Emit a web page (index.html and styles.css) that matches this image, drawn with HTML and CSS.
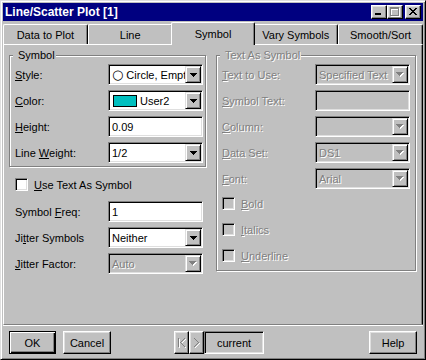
FILE: index.html
```html
<!DOCTYPE html>
<html lang="en">
<head>
    <meta charset="UTF-8">
    <title>Line/Scatter Plot [1]</title>
    <link rel="stylesheet" href="styles.css">
</head>
<body>
    <div class="window">
        <div class="titlebar">
            <span class="title">Line/Scatter Plot [1]</span>
            <div class="title-buttons">
                <span class="tbtn"><svg width="14" height="12"><rect x="3" y="7" width="6" height="2" fill="#000"/></svg></span>
                <span class="tbtn"><svg width="14" height="12">
                    <path d="M3 2h9v9h-9z M4 4v6h7v-6z" fill="#fff" fill-rule="evenodd"/>
                    <path d="M2 1h9v9h-9z M3 3v6h7v-6z" fill="#808080" fill-rule="evenodd"/>
                </svg></span>
                <span class="tbtn close"><svg width="14" height="12"><path transform="translate(3 2)" d="M0 0h2v1h-2z M6 0h2v1h-2z M1 1h2v1h-2z M5 1h2v1h-2z M2 2h4v1h-4z M3 3h2v1h-2z M2 4h4v1h-4z M1 5h2v1h-2z M5 5h2v1h-2z M0 6h2v1h-2z M6 6h2v1h-2z" fill="#000"/></svg></span>
            </div>
        </div>

        <div class="tabs">
            <div class="tab">Data to Plot</div>
            <div class="tab">Line</div>
            <div class="tab active">Symbol</div>
            <div class="tab">Vary Symbols</div>
            <div class="tab">Smooth/Sort</div>
        </div>

        <div class="panel">
            <!-- left column -->
            <div class="col col-left">
                <div class="group group-symbol">
                    <span class="group-title">Symbol</span>
                    <div class="row">
                        <label><u>S</u>tyle:</label>
                        <div class="combo">
                            <span class="combo-text"><span class="glyph">○</span>Circle, Empty</span>
                            <span class="drop"><svg width="7" height="4"><path d="M0 0h7v1h-1v1h-1v1h-1v1h-1v-1h-1v-1h-1v-1h-1z" fill="#000"/></svg></span>
                        </div>
                    </div>
                    <div class="row">
                        <label><u>C</u>olor:</label>
                        <div class="combo">
                            <span class="combo-text"><span class="swatch"></span>User2</span>
                            <span class="drop"><svg width="7" height="4"><path d="M0 0h7v1h-1v1h-1v1h-1v1h-1v-1h-1v-1h-1v-1h-1z" fill="#000"/></svg></span>
                        </div>
                    </div>
                    <div class="row">
                        <label><u>H</u>eight:</label>
                        <div class="field">0.09</div>
                    </div>
                    <div class="row">
                        <label>Line <u>W</u>eight:</label>
                        <div class="combo">
                            <span class="combo-text">1/2</span>
                            <span class="drop"><svg width="7" height="4"><path d="M0 0h7v1h-1v1h-1v1h-1v1h-1v-1h-1v-1h-1v-1h-1z" fill="#000"/></svg></span>
                        </div>
                    </div>
                </div>

                <div class="check-row use-text">
                    <span class="check"></span>
                    <span><u>U</u>se Text As Symbol</span>
                </div>

                <div class="loose-rows">
                    <div class="row">
                        <label>Symbol <u>F</u>req:</label>
                        <div class="field">1</div>
                    </div>
                    <div class="row">
                        <label>Ji<u>t</u>ter Symbols</label>
                        <div class="combo">
                            <span class="combo-text">Neither</span>
                            <span class="drop"><svg width="7" height="4"><path d="M0 0h7v1h-1v1h-1v1h-1v1h-1v-1h-1v-1h-1v-1h-1z" fill="#000"/></svg></span>
                        </div>
                    </div>
                    <div class="row">
                        <label><u>J</u>itter Factor:</label>
                        <div class="combo disabled">
                            <span class="combo-text">Auto</span>
                            <span class="drop"><svg width="8" height="5"><path transform="translate(1 1)" d="M0 0h7v1h-1v1h-1v1h-1v1h-1v-1h-1v-1h-1v-1h-1z" fill="#fff"/><path d="M0 0h7v1h-1v1h-1v1h-1v1h-1v-1h-1v-1h-1v-1h-1z" fill="#808080"/></svg></span>
                        </div>
                    </div>
                </div>
            </div>

            <!-- right column -->
            <div class="col col-right">
                <div class="group group-text disabled">
                    <span class="group-title">Text As Symbol</span>
                    <div class="rows">
                        <div class="row">
                            <label><u>T</u>ext to Use:</label>
                            <div class="combo disabled">
                                <span class="combo-text">Specified Text</span>
                                <span class="drop"><svg width="8" height="5"><path transform="translate(1 1)" d="M0 0h7v1h-1v1h-1v1h-1v1h-1v-1h-1v-1h-1v-1h-1z" fill="#fff"/><path d="M0 0h7v1h-1v1h-1v1h-1v1h-1v-1h-1v-1h-1v-1h-1z" fill="#808080"/></svg></span>
                            </div>
                        </div>
                        <div class="row">
                            <label><u>S</u>ymbol Text:</label>
                            <div class="field disabled"></div>
                        </div>
                        <div class="row">
                            <label><u>C</u>olumn:</label>
                            <div class="combo disabled">
                                <span class="combo-text"></span>
                                <span class="drop"><svg width="8" height="5"><path transform="translate(1 1)" d="M0 0h7v1h-1v1h-1v1h-1v1h-1v-1h-1v-1h-1v-1h-1z" fill="#fff"/><path d="M0 0h7v1h-1v1h-1v1h-1v1h-1v-1h-1v-1h-1v-1h-1z" fill="#808080"/></svg></span>
                            </div>
                        </div>
                        <div class="row">
                            <label><u>D</u>ata Set:</label>
                            <div class="combo disabled">
                                <span class="combo-text">DS1</span>
                                <span class="drop"><svg width="8" height="5"><path transform="translate(1 1)" d="M0 0h7v1h-1v1h-1v1h-1v1h-1v-1h-1v-1h-1v-1h-1z" fill="#fff"/><path d="M0 0h7v1h-1v1h-1v1h-1v1h-1v-1h-1v-1h-1v-1h-1z" fill="#808080"/></svg></span>
                            </div>
                        </div>
                        <div class="row">
                            <label><u>F</u>ont:</label>
                            <div class="combo disabled">
                                <span class="combo-text">Arial</span>
                                <span class="drop"><svg width="8" height="5"><path transform="translate(1 1)" d="M0 0h7v1h-1v1h-1v1h-1v1h-1v-1h-1v-1h-1v-1h-1z" fill="#fff"/><path d="M0 0h7v1h-1v1h-1v1h-1v1h-1v-1h-1v-1h-1v-1h-1z" fill="#808080"/></svg></span>
                            </div>
                        </div>
                    </div>
                    <div class="checks">
                        <div class="check-row"><span class="check"></span><span><u>B</u>old</span></div>
                        <div class="check-row"><span class="check"></span><span><u>I</u>talics</span></div>
                        <div class="check-row"><span class="check"></span><span><u>U</u>nderline</span></div>
                    </div>
                </div>
            </div>
        </div>

        <div class="buttons">
            <button class="btn default">OK</button>
            <button class="btn cancel">Cancel</button>
            <div class="nav">
                <span class="btn nav-btn"><svg width="8" height="10">
                    <path transform="translate(1 1)" d="M0 0h1v9h-1z M6 0h1v1h-1z M5 1h1v1h-1z M4 2h1v1h-1z M3 3h1v1h-1z M2 4h1v1h-1z M3 5h1v1h-1z M4 6h1v1h-1z M5 7h1v1h-1z M6 8h1v1h-1z" fill="#fff"/>
                    <path d="M0 0h1v9h-1z M6 0h1v1h-1z M5 1h1v1h-1z M4 2h1v1h-1z M3 3h1v1h-1z M2 4h1v1h-1z M3 5h1v1h-1z M4 6h1v1h-1z M5 7h1v1h-1z M6 8h1v1h-1z" fill="#808080"/>
                </svg></span>
                <span class="btn nav-btn"><svg width="6" height="10">
                    <path transform="translate(1 1)" d="M0 0h1v1h-1z M1 1h1v1h-1z M2 2h1v1h-1z M3 3h1v1h-1z M4 4h1v1h-1z M3 5h1v1h-1z M2 6h1v1h-1z M1 7h1v1h-1z M0 8h1v1h-1z" fill="#fff"/>
                    <path d="M0 0h1v1h-1z M1 1h1v1h-1z M2 2h1v1h-1z M3 3h1v1h-1z M4 4h1v1h-1z M3 5h1v1h-1z M2 6h1v1h-1z M1 7h1v1h-1z M0 8h1v1h-1z" fill="#808080"/>
                </svg></span>
                <span class="current">current</span>
            </div>
            <button class="btn help">Help</button>
        </div>
    </div>
</body>
</html>
```

FILE: styles.css
```css
body {
    margin: 0;
    background: #c0c0c0;
    font-family: "Liberation Sans", Arial, sans-serif;
    font-size: 11px;
    color: #000;
}

.window {
    width: 426px;
    height: 360px;
    box-sizing: border-box;
    border: 1px solid;
    border-color: #dfdfdf #000 #000 #dfdfdf;
    box-shadow: inset 1px 1px #fff, inset -1px -1px #808080;
    padding: 2px;
    background: #c0c0c0;
}

/* title bar */
.titlebar {
    height: 18px;
    display: flex;
    align-items: center;
    justify-content: space-between;
    background: #000080;
    color: #fff;
    padding: 0 2px;
}

.title {
    font-weight: bold;
    font-size: 12px;
}

.title-buttons {
    display: flex;
}

.tbtn {
    width: 16px;
    height: 14px;
    box-sizing: border-box;
    border: 1px solid;
    border-color: #fff #000 #000 #fff;
    box-shadow: inset -1px -1px #808080, inset 1px 1px #dfdfdf;
    background: #c0c0c0;
    display: flex;
}

.tbtn.close {
    margin-left: 2px;
}

/* tabs */
.tabs {
    display: flex;
    height: 22px;
    margin-top: 1px;
}

.tab {
    flex: 1;
    margin-top: 2px;
    height: 20px;
    box-sizing: border-box;
    border: 1px solid;
    border-color: #fff #000 transparent #fff;
    border-bottom: none;
    border-radius: 2px 2px 0 0;
    box-shadow: inset -1px 0 #808080;
    display: flex;
    align-items: center;
    justify-content: center;
    color: #000;
}

.tab.active {
    position: relative;
    z-index: 1;
    margin: 0 -2px -1px;
    height: 23px;
    background: #c0c0c0;
}

/* main panel */
.panel {
    height: 281px;
    box-sizing: border-box;
    border: 1px solid;
    border-color: #fff #000 #808080 #fff;
    box-shadow: inset -1px 0 #808080, 0 1px #fff;
    display: flex;
    gap: 10px;
    padding: 10px 6px 0 5px;
}

.col {
    display: flex;
    flex-direction: column;
}

.col-left {
    width: 197px;
}

.col-right {
    width: 200px;
}

.group {
    position: relative;
    border: 1px solid #808080;
    box-shadow: inset 1px 1px #fff, 1px 1px #fff;
}

.group-title {
    position: absolute;
    top: -7px;
    left: 3px;
    line-height: 13px;
    padding: 0 1px 0 5px;
    background: #c0c0c0;
}

.group-symbol {
    display: flex;
    flex-direction: column;
    gap: 5px;
    padding: 8px 2px 3px 5px;
}

.group-text {
    padding: 8px 4px 8px 5px;
}

.rows,
.loose-rows {
    display: flex;
    flex-direction: column;
    gap: 5px;
}

.loose-rows {
    margin-top: 10px;
    padding-left: 6px;
}

.row {
    display: flex;
    align-items: center;
    height: 21px;
}

.row label {
    width: 93px;
}

/* combo boxes and text fields */
.combo,
.field {
    width: 95px;
    height: 21px;
    box-sizing: border-box;
    border: 1px solid;
    border-color: #808080 #fff #fff #808080;
    box-shadow: inset 1px 1px #000, inset -1px -1px #dfdfdf;
    background: #fff;
    padding: 1px;
    display: flex;
    align-items: center;
}

.field {
    padding-left: 3px;
}

.combo-text {
    flex: 1;
    padding-left: 2px;
    white-space: nowrap;
    overflow: hidden;
    display: flex;
    align-items: center;
}

.glyph {
    font-family: "DejaVu Sans", sans-serif;
    font-size: 13px;
    line-height: 13px;
    margin-right: 3px;
}

.swatch {
    width: 22px;
    height: 10px;
    border: 1px solid #000;
    background: #00c0c0;
    margin: 0 3px 0 1px;
}

.drop {
    width: 16px;
    height: 17px;
    flex: none;
    box-sizing: border-box;
    border: 1px solid;
    border-color: #dfdfdf #000 #000 #dfdfdf;
    box-shadow: inset 1px 1px #fff, inset -1px -1px #808080;
    background: #c0c0c0;
    display: flex;
    align-items: center;
    justify-content: center;
}

.combo.disabled,
.field.disabled {
    background: #c0c0c0;
}

.disabled,
.disabled .combo-text {
    color: #808080;
    text-shadow: 1px 1px 0 #fff;
}

/* check boxes */
.check-row {
    display: flex;
    align-items: center;
    height: 13px;
    gap: 6px;
}

.use-text {
    margin-top: 11px;
    padding-left: 6px;
}

.check {
    width: 13px;
    height: 13px;
    box-sizing: border-box;
    border: 1px solid;
    border-color: #808080 #fff #fff #808080;
    box-shadow: inset 1px 1px #000, inset -1px -1px #dfdfdf;
    background: #fff;
}

.disabled .check {
    background: #c0c0c0;
}

.checks {
    display: flex;
    flex-direction: column;
    gap: 13px;
    margin-top: 8px;
}

/* bottom buttons */
.buttons {
    display: flex;
    align-items: center;
    height: 23px;
    margin-top: 6px;
    padding: 0 6px;
}

.btn {
    height: 23px;
    box-sizing: border-box;
    border: 1px solid;
    border-color: #fff #000 #000 #fff;
    box-shadow: inset -1px -1px #808080, inset 1px 1px #dfdfdf;
    background: #c0c0c0;
    font-family: inherit;
    font-size: 11px;
    color: #000;
    padding: 0;
    display: flex;
    align-items: center;
    justify-content: center;
}

.btn.default {
    width: 47px;
    border-color: #000;
    box-shadow: inset 1px 1px #fff, inset -1px -1px #000, inset -2px -2px #808080;
}

.btn.cancel {
    width: 48px;
    margin-left: 7px;
}

.btn.help {
    width: 48px;
    margin-left: auto;
}

.nav {
    display: flex;
    margin-left: 63px;
}

.nav-btn {
    width: 15px;
}

.current {
    width: 60px;
    height: 23px;
    box-sizing: border-box;
    border: 1px solid;
    border-color: #808080 #fff #fff #808080;
    box-shadow: inset 1px 1px #000, inset -1px -1px #dfdfdf;
    display: flex;
    align-items: center;
    justify-content: center;
}
```
